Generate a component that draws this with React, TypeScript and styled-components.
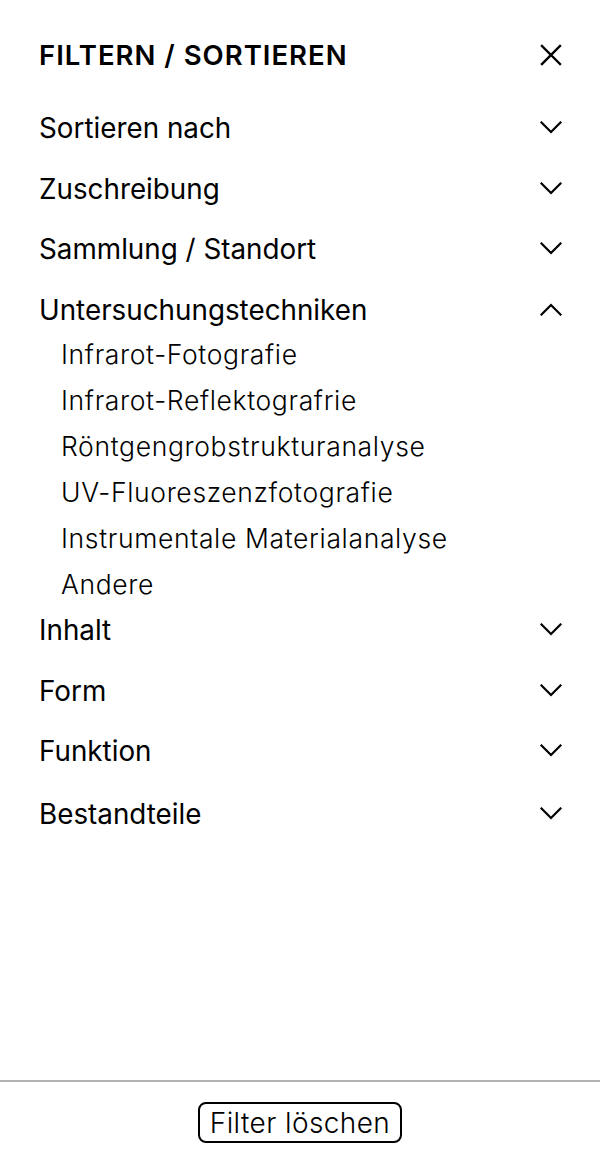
import React, { useState } from "react";
import styled, { createGlobalStyle } from "styled-components";

const GlobalStyle = createGlobalStyle`
  html, body { margin: 0; padding: 0; background: #fff; }
  body { font-family: "Inter", "Noto Sans", sans-serif; color: #000; }
  * { box-sizing: border-box; }
`;

const Panel = styled.div`
  width: 100%;
  height: 1164px;
  display: flex;
  flex-direction: column;
  background: #fff;
`;

const Content = styled.div`
  flex: 1;
  padding: 35px 38px 0 39px;
`;

const Header = styled.div`
  display: flex;
  align-items: center;
  justify-content: space-between;
  height: 40px;
  margin-bottom: 24px;
`;

const Title = styled.h1`
  margin: 0;
  font-size: 27.5px;
  font-weight: 600;
  letter-spacing: 1px;
`;

const IconButton = styled.button`
  border: 0;
  background: none;
  padding: 0;
  width: 22px;
  height: 22px;
  display: flex;
  align-items: center;
  justify-content: center;
  cursor: pointer;
`;

const Section = styled.div<{ $last?: boolean }>`
  margin-top: ${(p) => (p.$last ? "2px" : "0")};
`;

const HeadingRow = styled.button`
  width: 100%;
  height: 60.5px;
  border: 0;
  background: none;
  padding: 0;
  display: flex;
  align-items: center;
  justify-content: space-between;
  font: inherit;
  color: inherit;
  cursor: pointer;
  text-align: left;
`;

const HeadingText = styled.span`
  font-size: 27.8px;
  font-weight: 400;
  line-height: 1;
`;

const Chevron = styled.span`
  display: flex;
  width: 22px;
  justify-content: center;
  margin-top: -3px;
`;

const SubList = styled.ul`
  list-style: none;
  margin: -10px 0 -6px 0;
  padding: 0 0 0 22px;
`;

const SubItem = styled.li`
  font-size: 26.5px;
  font-weight: 300;
  letter-spacing: 0.65px;
  line-height: 46px;
`;

const Footer = styled.div`
  border-top: 2px solid #b3b3b3;
  height: 84px;
  display: flex;
  justify-content: center;
  padding-top: 20px;
`;

const ClearButton = styled.button`
  height: 41px;
  padding: 0 10px;
  border: 2px solid #000;
  border-radius: 8px;
  background: #fff;
  font-family: inherit;
  font-size: 28px;
  font-weight: 300;
  letter-spacing: 0.4px;
  color: #000;
  line-height: 1;
  cursor: pointer;
`;

const ChevronIcon = ({ up }: { up?: boolean }) => (
  <svg width="22" height="13" viewBox="0 0 22 13" fill="none">
    <path
      d={up ? "M1.5 11.5 L11 2 L20.5 11.5" : "M1.5 1.5 L11 11 L20.5 1.5"}
      stroke="#000"
      strokeWidth="2.2"
      strokeLinecap="square"
    />
  </svg>
);

const CloseIcon = () => (
  <svg width="22" height="22" viewBox="0 0 22 22" fill="none">
    <path d="M2 2 L20 20 M20 2 L2 20" stroke="#000" strokeWidth="2.4" strokeLinecap="square" />
  </svg>
);

const sections: { title: string; items?: string[] }[] = [
  { title: "Sortieren nach" },
  { title: "Zuschreibung" },
  { title: "Sammlung / Standort" },
  {
    title: "Untersuchungstechniken",
    items: [
      "Infrarot-Fotografie",
      "Infrarot-Reflektografrie",
      "Röntgengrobstrukturanalyse",
      "UV-Fluoreszenzfotografie",
      "Instrumentale Materialanalyse",
      "Andere",
    ],
  },
  { title: "Inhalt" },
  { title: "Form" },
  { title: "Funktion" },
  { title: "Bestandteile" },
];

export default function App() {
  const [open, setOpen] = useState<string>("Untersuchungstechniken");
  return (
    <>
      <GlobalStyle />
      <Panel>
        <Content>
          <Header>
            <Title>FILTERN / SORTIEREN</Title>
            <IconButton aria-label="Schließen">
              <CloseIcon />
            </IconButton>
          </Header>
          {sections.map((s, i) => {
            const isOpen = open === s.title && !!s.items;
            return (
              <Section key={s.title} $last={i === sections.length - 1}>
                <HeadingRow onClick={() => setOpen(isOpen ? "" : s.title)}>
                  <HeadingText>{s.title}</HeadingText>
                  <Chevron>
                    <ChevronIcon up={isOpen} />
                  </Chevron>
                </HeadingRow>
                {isOpen && (
                  <SubList>
                    {s.items!.map((it) => (
                      <SubItem key={it}>{it}</SubItem>
                    ))}
                  </SubList>
                )}
              </Section>
            );
          })}
        </Content>
        <Footer>
          <ClearButton>Filter löschen</ClearButton>
        </Footer>
      </Panel>
    </>
  );
}
